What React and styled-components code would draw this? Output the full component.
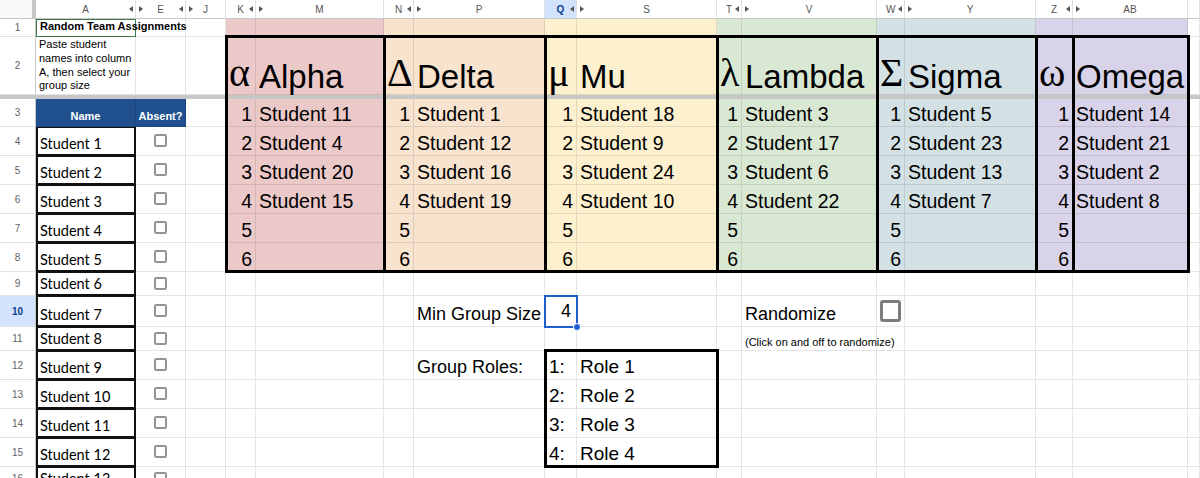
import React from 'react';
import styled, { createGlobalStyle, css } from 'styled-components';

const COLUMNS = [
    { id: 'A', width: 100, right: true },
    { id: 'E', width: 50, left: true, right: true },
    { id: 'J', width: 40, left: true },
    { id: 'K', width: 30, right: true },
    { id: 'M', width: 128, left: true },
    { id: 'N', width: 30, right: true },
    { id: 'P', width: 131, left: true },
    { id: 'Q', width: 32, right: true, active: true },
    { id: 'S', width: 140, left: true },
    { id: 'T', width: 25, right: true },
    { id: 'V', width: 135, left: true },
    { id: 'W', width: 28, right: true },
    { id: 'Y', width: 131, left: true },
    { id: 'Z', width: 37, right: true },
    { id: 'AB', width: 115, left: true },
    { id: 'AC', width: 12, label: '' },
];

const ROWS = [
    { n: 1, h: 18 },
    { n: 2, h: 58 },
    { n: 3, h: 28 },
    { n: 4, h: 29 },
    { n: 5, h: 29 },
    { n: 6, h: 29 },
    { n: 7, h: 29 },
    { n: 8, h: 29 },
    { n: 9, h: 24 },
    { n: 10, h: 31 },
    { n: 11, h: 24 },
    { n: 12, h: 29 },
    { n: 13, h: 29 },
    { n: 14, h: 29 },
    { n: 15, h: 29 },
    { n: 16, h: 24 },
];

const GROUPS = [
    { num: 'K', name: 'M', letter: 'α', title: 'Alpha', bg: '#ecc9c9', members: ['Student 11', 'Student 4', 'Student 20', 'Student 15'] },
    { num: 'N', name: 'P', letter: 'Δ', title: 'Delta', bg: '#f8e3cf', members: ['Student 1', 'Student 12', 'Student 16', 'Student 19'] },
    { num: 'Q', name: 'S', letter: 'μ', title: 'Mu', bg: '#fcf0cf', members: ['Student 18', 'Student 9', 'Student 24', 'Student 10'] },
    { num: 'T', name: 'V', letter: 'λ', title: 'Lambda', bg: '#d9e8d3', members: ['Student 3', 'Student 17', 'Student 6', 'Student 22'] },
    { num: 'W', name: 'Y', letter: 'Σ', title: 'Sigma', bg: '#d3e0e4', members: ['Student 5', 'Student 23', 'Student 13', 'Student 7'] },
    { num: 'Z', name: 'AB', letter: 'ω', title: 'Omega', bg: '#d8d3e8', members: ['Student 14', 'Student 21', 'Student 2', 'Student 8'], split: true },
];

const GROUP_BY_COL = {};
GROUPS.forEach((g) => {
    GROUP_BY_COL[g.num] = g;
    GROUP_BY_COL[g.name] = g;
});

// the frozen-rows bar sits between sheet rows 2 and 3
const rowLine = (n) => (n <= 2 ? n + 1 : n + 2);
const colLine = (id) => COLUMNS.findIndex((c) => c.id === id) + 2;
const colSpan = (a, b) => `${colLine(a)} / ${colLine(b) + 1}`;
const rowSpan = (a, b) => `${rowLine(a)} / ${rowLine(b) + 1}`;

const TEMPLATE_COLUMNS = ['36px', ...COLUMNS.map((c) => c.width + 'px')].join(' ');
const TEMPLATE_ROWS = [
    '19px',
    ...ROWS.filter((r) => r.n <= 2).map((r) => r.h + 'px'),
    '4px',
    ...ROWS.filter((r) => r.n > 2).map((r) => r.h + 'px'),
].join(' ');

const GlobalStyle = createGlobalStyle`
    *, *::before, *::after {
        box-sizing: border-box;
    }

    html, body {
        margin: 0;
        padding: 0;
        background: #fff;
        overflow: hidden;
    }

    body {
        font-family: "Liberation Sans", Arial, sans-serif;
        color: #000;
    }
`;

const place = css`
    grid-column: ${(p) => p.$col};
    grid-row: ${(p) => p.$row};
`;

const SheetStyled = styled.div`
    display: grid;
    grid-template-columns: ${TEMPLATE_COLUMNS};
    grid-template-rows: ${TEMPLATE_ROWS};
    width: max-content;
    height: 478px;
    overflow: hidden;
`;

const CornerStyled = styled.div`
    grid-column: 1;
    grid-row: 1;
    background: #f8f9fa;
    border-right: 4px solid #c7c7c7;
    border-bottom: 1px solid #c7c7c7;
`;

const ColHeadStyled = styled.div`
    ${place}
    display: grid;
    grid-template-columns: 9px 1fr 9px;
    align-items: center;
    justify-items: center;
    min-width: 0;
    background: ${(p) => (p.$active ? '#d3e3fd' : '#fff')};
    border-right: 1px solid #e1e1e1;
    border-bottom: 1px solid #c7c7c7;
    color: ${(p) => (p.$active ? '#0b3d91' : '#555')};
    font-size: 10px;
    font-weight: ${(p) => (p.$active ? 700 : 400)};
`;

const ArrowStyled = styled.span`
    display: block;
    width: 0;
    height: 0;
    border-top: 3px solid transparent;
    border-bottom: 3px solid transparent;
    ${(p) =>
        p.$dir === 'left'
            ? css`
                  border-right: 4px solid #555;
              `
            : css`
                  border-left: 4px solid #555;
              `}
`;

const RowHeadStyled = styled.div`
    ${place}
    display: flex;
    align-items: center;
    justify-content: center;
    background: ${(p) => (p.$active ? '#d3e3fd' : '#fff')};
    border-right: 1px solid #c7c7c7;
    border-bottom: 1px solid #e1e1e1;
    color: ${(p) => (p.$active ? '#0b3d91' : '#5f6368')};
    font-size: 10px;
    font-weight: ${(p) => (p.$active ? 700 : 400)};
`;

const FreezeBarStyled = styled.div`
    grid-column: 1 / -1;
    grid-row: 4;
    background: #c7c7c7;
    z-index: 1;
`;

const CellStyled = styled.div`
    ${place}
    display: flex;
    align-items: ${(p) => p.$valign || 'flex-end'};
    justify-content: ${(p) => p.$justify || 'flex-start'};
    min-width: 0;
    padding: 0 3px 1px;
    background: ${(p) => p.$bg || 'transparent'};
    border-right: 1px solid rgba(0, 0, 0, 0.1);
    border-bottom: 1px solid rgba(0, 0, 0, 0.1);
    white-space: nowrap;

    ${(p) =>
        p.$boxed &&
        css`
            padding: 0 2px 2px;
            border: 2px solid #111;
            border-top-width: 1px;
        `}

    ${(p) =>
        p.$outlined &&
        css`
            border: 1px solid #3b7a46;
        `}
`;

const FrameStyled = styled.div`
    ${place}
    margin: -2px -2px -1px -1px;
    border: 3px solid #000;
    z-index: 2;
    pointer-events: none;
`;

const SelectionStyled = styled.div`
    ${place}
    position: relative;
    margin: -1px;
    border: 2px solid #1f5ed1;
    z-index: 3;
`;

const FillHandleStyled = styled.span`
    position: absolute;
    right: -5px;
    bottom: -5px;
    width: 8px;
    height: 8px;
    border-radius: 50%;
    background: #1f5ed1;
    border: 1px solid #fff;
`;

const TitleStyled = styled.span`
    padding-bottom: 2px;
    font-size: 11px;
    font-weight: 700;
    line-height: 1.15;
`;

const InstructionsStyled = styled.span`
    font-size: 11px;
    line-height: 13.7px;
`;

const HeadLabelStyled = styled.span`
    padding-bottom: 2px;
    color: #fff;
    font-size: 11px;
    font-weight: 700;
    line-height: 1.15;
`;

const StudentNameStyled = styled.span`
    font-family: Lato, "Open Sans", sans-serif;
    font-size: 14.5px;
    line-height: 1.2;
`;

const CheckboxStyled = styled.span`
    display: block;
    width: ${(p) => (p.$big ? 22 : 13)}px;
    height: ${(p) => (p.$big ? 22 : 13)}px;
    border: ${(p) => (p.$big ? 3 : 2)}px solid ${(p) => (p.$big ? '#7d7d7d' : '#959595')};
    border-radius: ${(p) => (p.$big ? 3 : 2)}px;
    background: #fff;
`;

const GreekStyled = styled.span`
    font-family: "Liberation Serif", "DejaVu Serif", serif;
    font-size: 40px;
    line-height: 1;
`;

const GroupTitleStyled = styled.span`
    font-size: 33px;
    line-height: 1;
`;

const EntryStyled = styled.span`
    font-size: 19.5px;
    line-height: 1.15;
`;

const LabelStyled = styled.span`
    font-size: 18px;
    line-height: 1.15;
`;

const ValueStyled = styled.span`
    padding: 0 2px 3px 0;
    font-size: 18px;
    line-height: 1.15;
`;

const HintStyled = styled.span`
    font-size: 11px;
    line-height: 1.15;
`;

const RoleStyled = styled.span`
    padding-left: ${(p) => (p.$index ? 1 : 0)}px;
    font-size: 19px;
    line-height: 1.15;
`;

const EXTRA = {
    P10: { content: <LabelStyled>Min Group Size</LabelStyled> },
    Q10: { content: <ValueStyled>4</ValueStyled>, justify: 'flex-end' },
    V10: { content: <LabelStyled>Randomize</LabelStyled> },
    W10: { content: <CheckboxStyled $big />, justify: 'center', valign: 'center' },
    V11: { content: <HintStyled>(Click on and off to randomize)</HintStyled> },
    P12: { content: <LabelStyled>Group Roles:</LabelStyled> },
};
[1, 2, 3, 4].forEach((i) => {
    EXTRA['Q' + (11 + i)] = { content: <RoleStyled $index>{i}:</RoleStyled> };
    EXTRA['S' + (11 + i)] = { content: <RoleStyled>Role {i}</RoleStyled> };
});

function cellSpec(col, row) {
    const group = GROUP_BY_COL[col];
    if (group && row <= 8) {
        const isNum = group.num === col;
        if (row === 2) {
            return {
                bg: group.bg,
                content: isNum ? <GreekStyled>{group.letter}</GreekStyled> : <GroupTitleStyled>{group.title}</GroupTitleStyled>,
            };
        }
        if (row >= 3) {
            return isNum
                ? { bg: group.bg, justify: 'flex-end', content: <EntryStyled>{row - 2}</EntryStyled> }
                : { bg: group.bg, content: <EntryStyled>{group.members[row - 3]}</EntryStyled> };
        }
        return { bg: group.bg };
    }

    if (col === 'A') {
        if (row === 1) return { outlined: true, content: <TitleStyled>Random Team Assignments</TitleStyled> };
        if (row === 2)
            return {
                content: (
                    <InstructionsStyled>
                        Paste student
                        <br />
                        names into column
                        <br />
                        A, then select your
                        <br />
                        group size
                    </InstructionsStyled>
                ),
            };
        if (row === 3) return { bg: '#21508f', justify: 'center', content: <HeadLabelStyled>Name</HeadLabelStyled> };
        return { boxed: true, content: <StudentNameStyled>Student {row - 3}</StudentNameStyled> };
    }

    if (col === 'E') {
        if (row === 3) return { bg: '#21508f', justify: 'center', content: <HeadLabelStyled>Absent?</HeadLabelStyled> };
        if (row >= 4) return { justify: 'center', valign: 'center', content: <CheckboxStyled /> };
        return {};
    }

    return EXTRA[col + row] || {};
}

export default function App() {
    const items = [];

    COLUMNS.forEach((c) => {
        items.push(
            <ColHeadStyled key={'col-' + c.id} $col={colLine(c.id)} $row={1} $active={c.active}>
                <span>{c.left && <ArrowStyled $dir="right" />}</span>
                <span>{c.label ?? c.id}</span>
                <span>{c.right && <ArrowStyled $dir="left" />}</span>
            </ColHeadStyled>
        );
    });

    ROWS.forEach(({ n }) => {
        items.push(
            <RowHeadStyled key={'row-' + n} $col={1} $row={rowLine(n)} $active={n === 10}>
                {n}
            </RowHeadStyled>
        );
        COLUMNS.forEach((c) => {
            const spec = cellSpec(c.id, n);
            items.push(
                <CellStyled
                    key={c.id + n}
                    $col={colLine(c.id)}
                    $row={rowLine(n)}
                    $bg={spec.bg}
                    $justify={spec.justify}
                    $valign={spec.valign}
                    $boxed={spec.boxed}
                    $outlined={spec.outlined}
                >
                    {spec.content}
                </CellStyled>
            );
        });
    });

    return (
        <>
            <GlobalStyle />
            <SheetStyled>
                <CornerStyled />
                {items}
                <FreezeBarStyled />
                {GROUPS.map((g) => (
                    <FrameStyled key={'frame-' + g.title} $col={colSpan(g.num, g.name)} $row={rowSpan(2, 8)} />
                ))}
                {GROUPS.filter((g) => g.split).map((g) => (
                    <FrameStyled key={'split-' + g.title} $col={colSpan(g.num, g.num)} $row={rowSpan(2, 8)} />
                ))}
                <FrameStyled $col={colSpan('Q', 'S')} $row={rowSpan(12, 15)} />
                <SelectionStyled $col={colSpan('Q', 'Q')} $row={rowSpan(10, 10)}>
                    <FillHandleStyled />
                </SelectionStyled>
            </SheetStyled>
        </>
    );
}
